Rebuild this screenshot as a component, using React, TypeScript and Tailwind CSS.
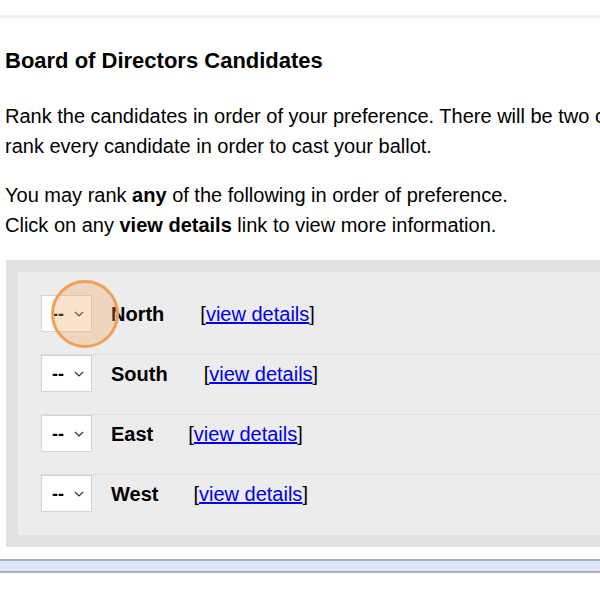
const CANDIDATES = [
  { name: "North", gap: "ml-[36px]" },
  { name: "South", gap: "ml-[36px]" },
  { name: "East", gap: "ml-[35px]" },
  { name: "West", gap: "ml-[35px]" },
];

function RankSelect() {
  return (
    <div className="flex h-[37px] w-[51px] shrink-0 items-center justify-between border border-[#d4d4d4] bg-white pl-[10px] pr-[7px]">
      <span className="text-[18px] font-bold leading-none text-black">--</span>
      <svg width="10" height="6" viewBox="0 0 10 6" fill="none" stroke="#333" strokeWidth="1.2">
        <path d="M1 1l4 4 4-4" />
      </svg>
    </div>
  );
}

export default function App() {
  return (
    <div className="relative h-[600px] w-[600px] overflow-hidden bg-white font-['Liberation_Sans',Arial,sans-serif] text-black">
      <div className="h-[18px] border-b-[3px] border-[#f3f3f3]" />

      <div className="whitespace-nowrap pl-[5px]">
        <h2 className="mt-[29px] text-[22px] font-bold leading-[28px]">Board of Directors Candidates</h2>

        <p className="mt-[26px] text-[20px] leading-[30px]">
          Rank the candidates in order of your preference. There will be two candidates elected. You must
          <br />
          rank every candidate in order to cast your ballot.
        </p>

        <p className="mt-[19px] text-[20px] leading-[30px]">
          You may rank <b>any</b> of the following in order of preference.
          <br />
          Click on any <b>view details</b> link to view more information.
        </p>
      </div>

      <div className="ml-[6px] mt-[20px] bg-[#e2e2e2] pl-[12px] pt-[12px] pb-[12px]">
        <div className="bg-[#ececec] pl-[23px] pt-[23px] pb-[23px]">
          {CANDIDATES.map((c, i) => (
            <div
              key={c.name}
              className={
                i < CANDIDATES.length - 1
                  ? "flex h-[60px] items-start border-b border-dotted border-[#d2d2d2]"
                  : "flex h-[37px] items-start"
              }
            >
              <div className="flex h-[37px] items-center">
                <RankSelect />
                <span className="ml-[19px] text-[20px] font-bold">{c.name}</span>
                <span className={`${c.gap} text-[20px]`}>
                  [<a href="#" className="text-[#0000ee] underline">view details</a>]
                </span>
              </div>
            </div>
          ))}
        </div>
      </div>

      <div className="mt-[12px] h-[14px] border-y-[2px] border-[#abaeb5] bg-[#dbe6fb]" />

      <div className="pointer-events-none absolute left-[51px] top-[280px] h-[68px] w-[68px] rounded-full border-[3px] border-[#f0a055] bg-[#f0a055]/30" />
    </div>
  );
}
